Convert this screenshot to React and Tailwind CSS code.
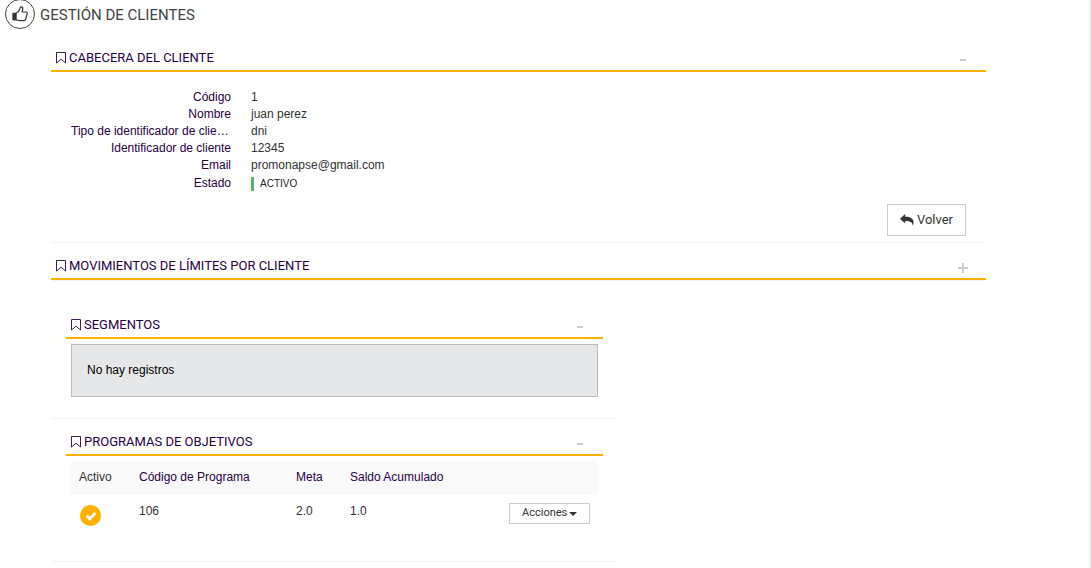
import React, { useState } from "react";

const clientFields = [
  { label: "Código", value: "1" },
  { label: "Nombre", value: "juan perez" },
  { label: "Tipo de identificador de cliente", value: "dni" },
  { label: "Identificador de cliente", value: "12345" },
  { label: "Email", value: "promonapse@gmail.com" },
];

const programs = [{ code: "106", goal: "2.0", balance: "1.0", active: true }];

function BookmarkIcon() {
  return (
    <svg viewBox="0 0 10 12" className="h-3 w-[10px] shrink-0" fill="none" stroke="currentColor" aria-hidden="true">
      <path d="M0.5 0.5H9.5V11L5 7.2L0.5 11Z" strokeWidth="0.9" strokeLinejoin="round" />
    </svg>
  );
}

function ThumbIcon() {
  return (
    <svg viewBox="0 0 16 16" className="h-4 w-4" aria-hidden="true">
      <path
        d="M4 7.2C5.6 6.6 7 4.9 7.6 3.6C8 2.6 7.9 0.9 9 0.8C10.6 0.7 11 2.2 10.7 3.4L10 6H14C15 6 15.5 6.8 15.2 7.8L13.6 13.4C13.4 14.2 12.8 14.6 12 14.6H8C6.4 14.6 5.6 13.8 4 13.8Z"
        fill="none"
        stroke="currentColor"
        strokeWidth="1.2"
        strokeLinejoin="round"
      />
      <path d="M0.4 6.8H4.2V14.4H0.4Z" fill="currentColor" />
    </svg>
  );
}

function ReplyIcon() {
  return (
    <svg viewBox="0 0 14 12" className="h-3 w-[14px]" fill="currentColor" aria-hidden="true">
      <path d="M0 4.7L5.2 0V2.8C10.4 2.8 13.6 4.6 13.6 8.4C13.6 9.6 13.3 10.8 12.7 11.8C12.8 8.4 10.6 6.9 5.2 6.9V9.6Z" />
    </svg>
  );
}

function CheckIcon() {
  return (
    <svg viewBox="0 0 12 10" className="h-[10px] w-3" fill="none" stroke="currentColor" aria-hidden="true">
      <path d="M1.6 4.8L4.6 7.7L10.4 2" strokeWidth="2.8" />
    </svg>
  );
}

function Panel({ title, inset, defaultOpen = true, children }) {
  const [open, setOpen] = useState(defaultOpen);

  return (
    <section className={`mb-2 rounded-b border-b border-[#f2f2f2] pt-px ${inset ? "px-[15px]" : "pr-px"}`}>
      <header className="flex h-7 items-center justify-between border-b-2 border-[#ffb100] pt-[2px] pr-[15px] pl-[5px]">
        <h2 className="flex items-center gap-[3px] font-[Roboto,sans-serif] text-[13px] text-[#280045]">
          <BookmarkIcon />
          {title}
        </h2>
        <button
          type="button"
          aria-label={`${open ? "Contraer" : "Expandir"} ${title}`}
          onClick={() => setOpen(!open)}
          className="mt-1 flex h-4 w-4 items-center justify-center text-[#cccccc]"
        >
          <svg viewBox="0 0 10 10" className="h-[10px] w-[10px]" fill="currentColor" aria-hidden="true">
            {open ? <path d="M2 4H8V6H2Z" /> : <path d="M0 4H4V0H6V4H10V6H6V10H4V6H0Z" />}
          </svg>
        </button>
      </header>
      {open && children}
    </section>
  );
}

function App() {
  return (
    <div className="min-h-screen border-r-2 border-[#f2f2f2] bg-white font-[Liberation_Sans,Arial,sans-serif] text-xs text-[#333333]">
      <div className="flex h-[29px] items-center gap-[5px] pt-[2px] pl-[5px]">
        <span className="-mt-1 flex h-[30px] w-[30px] items-center justify-center rounded-full border border-[#444444]">
          <ThumbIcon />
        </span>
        <h1 className="font-[Roboto,sans-serif] text-[15px] text-[#444444]">GESTIÓN DE CLIENTES</h1>
      </div>

      <main className="mt-[14px] mr-[102px] ml-[51px]">
        <Panel title="CABECERA DEL CLIENTE">
          <dl className="grid grid-cols-[160px_1fr] gap-x-5 px-5 pt-[17px] leading-[17px]">
            {clientFields.map((field) => (
              <React.Fragment key={field.label}>
                <dt className="truncate text-right text-[#280045]">{field.label}</dt>
                <dd>{field.value}</dd>
              </React.Fragment>
            ))}
            <dt className="mt-px text-right text-[#280045]">Estado</dt>
            <dd className="mt-px flex items-center">
              <span className="border-l-3 border-[#5cb85c] pl-[6px] text-[10px] leading-[14px] text-[#222222]">ACTIVO</span>
            </dd>
          </dl>
          <div className="flex justify-end px-5 pt-3 pb-[6px]">
            <button
              type="button"
              className="flex h-8 items-center gap-[3px] border border-[#cccccc] px-3 font-[Roboto,sans-serif] text-[13px] text-[#333333]"
            >
              <ReplyIcon />
              Volver
            </button>
          </div>
        </Panel>

        <Panel title="MOVIMIENTOS DE LÍMITES POR CLIENTE" defaultOpen={false} />

        <div className="mt-[29px] grid grid-cols-[20fr_13fr]">
          <div>
            <Panel title="SEGMENTOS" inset>
              <div className="mx-[5px] mt-[5px] mb-[21px] border border-[#bbbbbb] bg-[#e6e7e8] px-[15px] py-4 leading-[19px] text-black">
                No hay registros
              </div>
            </Panel>

            <Panel title="PROGRAMAS DE OBJETIVOS" inset>
              <div className="px-[5px] pt-[5px] pb-[35px]">
                <table className="w-full text-left">
                  <thead>
                    <tr className="h-[34px] bg-[#f9f9f9] text-[#280045]">
                      <th className="w-[60px] px-2 pb-[2px] font-normal text-[#333333]">Activo</th>
                      <th className="w-[157px] px-2 pb-[2px] font-normal">Código de Programa</th>
                      <th className="w-[54px] px-2 pb-[2px] font-normal">Meta</th>
                      <th className="px-2 pb-[2px] font-normal">Saldo Acumulado</th>
                      <th className="px-2" />
                    </tr>
                  </thead>
                  <tbody>
                    {programs.map((program) => (
                      <tr key={program.code} className="align-top">
                        <td className="px-2 pt-[10px]">
                          {program.active && (
                            <span className="ml-px flex h-[21px] w-[21px] items-center justify-center rounded-full bg-[#ffb100] text-white">
                              <CheckIcon />
                            </span>
                          )}
                        </td>
                        <td className="px-2 pt-2">{program.code}</td>
                        <td className="px-2 pt-2">{program.goal}</td>
                        <td className="px-2 pt-2">{program.balance}</td>
                        <td className="px-2 pt-2">
                          <button
                            type="button"
                            className="ml-auto flex h-[21px] items-center gap-[2px] border border-[#cccccc] px-3 font-[Roboto,sans-serif] text-[11px]"
                          >
                            Acciones
                            <svg viewBox="0 0 8 4" className="h-1 w-2" fill="currentColor" aria-hidden="true">
                              <path d="M0 0H8L4 4Z" />
                            </svg>
                          </button>
                        </td>
                      </tr>
                    ))}
                  </tbody>
                </table>
              </div>
            </Panel>
          </div>
        </div>
      </main>
    </div>
  );
}

export default App;
